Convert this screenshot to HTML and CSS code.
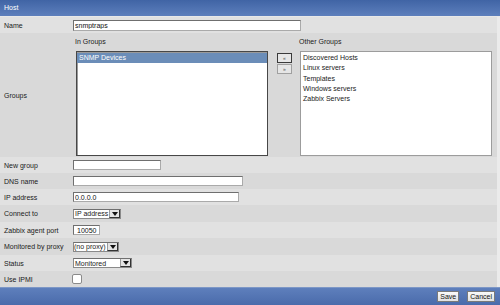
FILE: index.html
```html
<!DOCTYPE html>
<html lang="en">
<head>
    <meta charset="UTF-8">
    <title>Host</title>
    <link rel="stylesheet" href="styles.css">
</head>
<body>

<div class="form">
    <div class="form-header">Host</div>

    <div class="row light">
        <div class="label">Name</div>
        <div class="field"><input type="text" class="w-name" value="snmptraps"></div>
    </div>

    <div class="row dark groups-row">
        <div class="label">Groups</div>
        <div class="field groups">
            <div class="group-col">
                <div class="group-title">In Groups</div>
                <div class="listbox focused">
                    <div class="item selected">SNMP Devices</div>
                </div>
            </div>
            <div class="move-buttons">
                <span class="move focused">&laquo;</span>
                <span class="move">&raquo;</span>
            </div>
            <div class="group-col">
                <div class="group-title">Other Groups</div>
                <div class="listbox">
                    <div class="item">Discovered Hosts</div>
                    <div class="item">Linux servers</div>
                    <div class="item">Templates</div>
                    <div class="item">Windows servers</div>
                    <div class="item">Zabbix Servers</div>
                </div>
            </div>
        </div>
    </div>

    <div class="row light">
        <div class="label">New group</div>
        <div class="field"><input type="text" class="w-newgroup"></div>
    </div>
    <div class="row dark">
        <div class="label">DNS name</div>
        <div class="field"><input type="text" class="w-dns"></div>
    </div>
    <div class="row light">
        <div class="label">IP address</div>
        <div class="field"><input type="text" class="w-ip" value="0.0.0.0"></div>
    </div>
    <div class="row dark tall">
        <div class="label">Connect to</div>
        <div class="field">
            <div class="select w-connect"><span class="select-text">IP address</span><span class="arrow"></span></div>
        </div>
    </div>
    <div class="row light">
        <div class="label">Zabbix agent port</div>
        <div class="field"><input type="text" class="w-port" value="10050"></div>
    </div>
    <div class="row dark tall">
        <div class="label">Monitored by proxy</div>
        <div class="field">
            <div class="select w-proxy"><span class="select-text">(no proxy)</span><span class="arrow"></span></div>
        </div>
    </div>
    <div class="row light">
        <div class="label">Status</div>
        <div class="field">
            <div class="select w-status"><span class="select-text">Monitored</span><span class="arrow"></span></div>
        </div>
    </div>
    <div class="row dark">
        <div class="label">Use IPMI</div>
        <div class="field"><span class="checkbox"></span></div>
    </div>

    <div class="form-footer">
        <button type="button" class="btn">Save</button>
        <button type="button" class="btn">Cancel</button>
    </div>
</div>

</body>
</html>
```

FILE: styles.css
```css
body {
    margin: 0;
    font-family: "Liberation Sans", Arial, sans-serif;
    font-size: 7px;
    color: #1a1a1a;
    background: #e0e0e0;
}
.form {
    width: 500px;
}
.form-header {
    height: 16px;
    line-height: 16px;
    padding-left: 4px;
    color: #fff;
    background: linear-gradient(#4064a5, #5d7fbc);
    border-bottom: 1px solid #e8e8e8;
}
.row {
    display: flex;
    align-items: center;
    height: 16px;
    border-right: 3px solid #ebebeb;
}
.row.tall {
    height: 17px;
}
.row.light {
    background: #e1e1e1;
}
.row.dark {
    background: #d9d9d9;
}
.label {
    width: 69px;
    padding-left: 4px;
    flex-shrink: 0;
}
.field {
    display: flex;
    align-items: center;
}
input[type="text"] {
    box-sizing: border-box;
    height: 10px;
    margin: 0;
    padding: 0 1px;
    font-family: inherit;
    font-size: 7px;
    color: #111;
    background: #fff;
    border: 1px solid #aaa;
    border-top-color: #6f6f6f;
    border-left-color: #6f6f6f;
    outline: none;
}
.w-name { width: 228px; height: 11px !important; }
.w-newgroup { width: 88px; }
.w-dns { width: 170px; }
.w-ip { width: 166px; }
.w-port { width: 27px; padding-left: 3px !important; }

.groups-row {
    height: auto;
    align-items: center;
}
.groups {
    padding: 5px 0 1px 2px;
    align-items: flex-start;
}
.group-col {
    width: 193px;
}
.group-title {
    height: 8px;
    line-height: 8px;
    margin-bottom: 5px;
}
.listbox {
    box-sizing: border-box;
    width: 192px;
    height: 105px;
    margin-left: 1px;
    padding-top: 1px;
    background: #fff;
    border: 1px solid #9c9c9c;
}
.listbox.focused {
    border-color: #474747;
    box-shadow: inset 1px 1px 0 #9a9a9a;
}
.item {
    height: 10.3px;
    line-height: 10.3px;
    padding-left: 2px;
    white-space: nowrap;
}
.item.selected {
    height: 10px;
    line-height: 10px;
    color: #fff;
    background: #6b8db8;
}
.move-buttons {
    display: flex;
    flex-direction: column;
    gap: 1px;
    width: 15px;
    margin: 15px 7px 0 9px;
}
.move {
    box-sizing: border-box;
    height: 10px;
    line-height: 8px;
    font-size: 5px;
    text-align: center;
    color: #555;
    background: #e6e6e6;
    border: 1px solid #a0a0a0;
}
.move.focused {
    border-color: #3a3a3a;
}

.select {
    box-sizing: border-box;
    display: flex;
    align-items: center;
    height: 10px;
    background: #fff;
    border: 1px solid #8a8a8a;
    border-top-color: #6f6f6f;
}
.select-text {
    flex: 1;
    padding-left: 1px;
    white-space: nowrap;
    overflow: hidden;
}
.arrow {
    box-sizing: border-box;
    position: relative;
    flex-shrink: 0;
    width: 11px;
    height: 100%;
    background: #e4e4e4;
    border-left: 1px solid #9a9a9a;
    border-right: 1px solid #333;
    border-bottom: 1px solid #333;
}
.arrow::after {
    content: "";
    position: absolute;
    left: 2px;
    top: 2px;
    border-left: 3px solid transparent;
    border-right: 3px solid transparent;
    border-top: 4px solid #111;
}
.w-connect { width: 48px; }
.w-proxy { width: 46px; }
.w-proxy .select-text { padding-left: 0; overflow: visible; }
.w-status { width: 59px; }

.checkbox {
    box-sizing: border-box;
    display: block;
    width: 10px;
    height: 10px;
    margin-left: -1px;
    background: #fff;
    border: 1px solid #8a8a8a;
    border-radius: 2px;
}

.form-footer {
    display: flex;
    justify-content: flex-end;
    align-items: center;
    gap: 8px;
    height: 17px;
    padding-right: 5px;
    background: linear-gradient(#5e7fbc, #4a6bab);
    border-top: 1px solid #7d97c6;
}
.btn {
    box-sizing: border-box;
    height: 11px;
    margin: 0;
    padding: 0 2px;
    font-family: inherit;
    font-size: 7px;
    line-height: 9px;
    color: #111;
    background: linear-gradient(#fafafa, #e2e2e2);
    border: 1px solid #7a7a7a;
    border-radius: 0;
}
```
